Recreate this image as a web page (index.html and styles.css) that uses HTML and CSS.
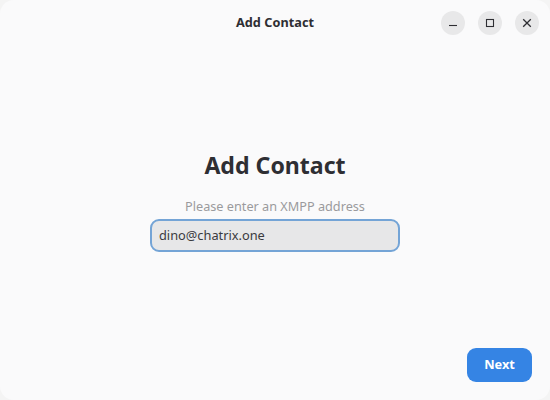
FILE: index.html
```html
<!DOCTYPE html>
<html lang="en">
<head>
<meta charset="utf-8">
<title>Add Contact</title>
<link rel="stylesheet" href="styles.css">
</head>
<body>
<div class="window">
  <header class="titlebar">
    <span class="title">Add Contact</span>
    <div class="controls">
      <button class="ctl" aria-label="Minimize"><svg width="16" height="16" viewBox="0 0 16 16"><path d="M4 10.5h8" stroke="#2e2e33" stroke-width="1.1" fill="none"/></svg></button>
      <button class="ctl" aria-label="Maximize"><svg width="16" height="16" viewBox="0 0 16 16"><rect x="4.5" y="4.5" width="7" height="7" stroke="#2e2e33" stroke-width="1.1" fill="none"/></svg></button>
      <button class="ctl" aria-label="Close"><svg width="16" height="16" viewBox="0 0 16 16"><path d="M4.2 4.2l7.6 7.6M11.8 4.2l-7.6 7.6" stroke="#2e2e33" stroke-width="1.3" fill="none"/></svg></button>
    </div>
  </header>
  <main class="content">
    <h1 class="heading">Add Contact</h1>
    <p class="hint">Please enter an XMPP address</p>
    <div class="entry">dino@chatrix.one</div>
  </main>
  <footer class="actions">
    <button class="next">Next</button>
  </footer>
</div>
</body>
</html>
```
FILE: styles.css
```css
* { box-sizing: border-box; }
html, body { margin: 0; height: 100%; background: #f4f4f4; }
body { font-family: "Noto Sans", "Open Sans", sans-serif; color: #2e2e33; }
.window {
  width: 550px;
  height: 400px;
  background: #fafafb;
  border-radius: 14px;
  display: flex;
  flex-direction: column;
  overflow: hidden;
}
.titlebar {
  height: 44px;
  flex: none;
  display: flex;
  align-items: center;
  justify-content: center;
  position: relative;
}
.title { font-size: 12.7px; font-weight: 700; letter-spacing: 0.05px; }
.controls {
  position: absolute;
  right: 11px;
  top: 11px;
  display: flex;
  gap: 13px;
}
.ctl {
  width: 24px;
  height: 24px;
  padding: 0;
  border: 0;
  border-radius: 50%;
  background: #e8e8e9;
  display: flex;
  align-items: center;
  justify-content: center;
}
.content {
  flex: 1;
  display: flex;
  flex-direction: column;
  align-items: center;
  padding-top: 105px;
}
.heading {
  margin: 0;
  font-size: 23.1px;
  line-height: 33px;
  font-weight: 700;
}
.hint {
  margin: 15px 0 0;
  font-size: 12.7px;
  line-height: 18px;
  color: #9a9a9d;
}
.entry {
  margin-top: 4px;
  width: 250px;
  height: 33px;
  padding: 0 7px;
  border: 2px solid #74a4d6;
  border-radius: 9px;
  background: #e7e7e8;
  font-size: 12.8px;
  line-height: 29px;
  color: #3a3a3e;
}
.actions {
  flex: none;
  display: flex;
  justify-content: flex-end;
  padding: 0 18px 18px 0;
}
.next {
  width: 65px;
  height: 34px;
  padding: 0 0 2px;
  border: 0;
  border-radius: 9px;
  background: #3584e4;
  color: #fff;
  font-family: inherit;
  font-size: 12.8px;
  font-weight: 700;
}
```
